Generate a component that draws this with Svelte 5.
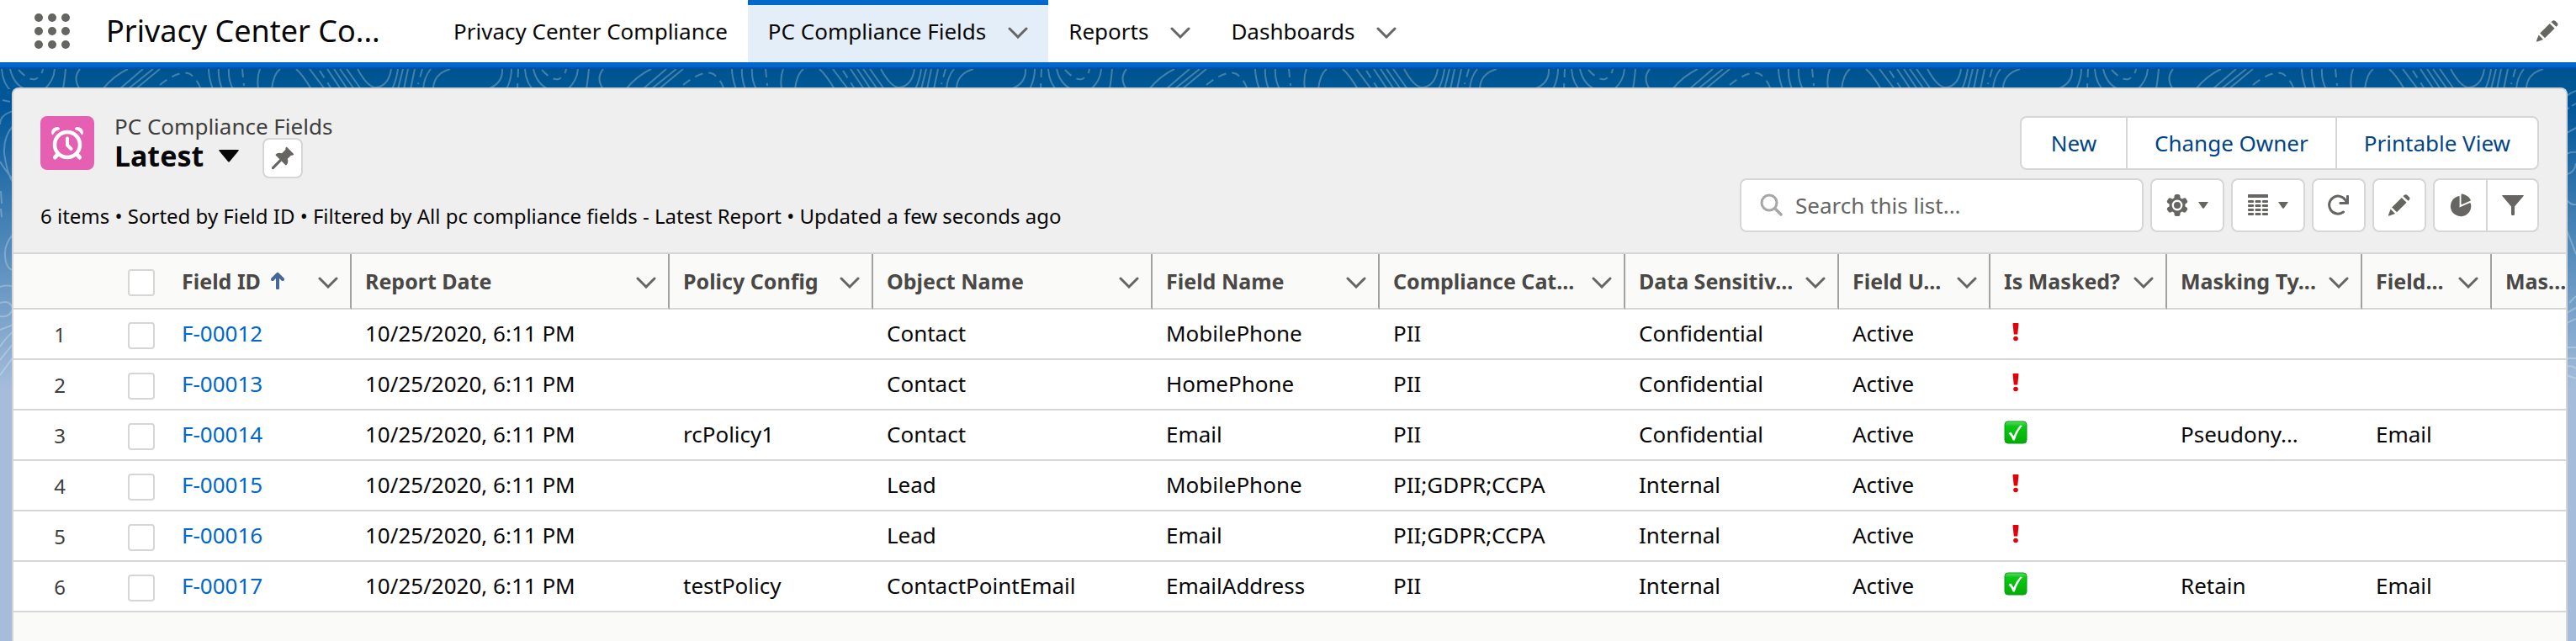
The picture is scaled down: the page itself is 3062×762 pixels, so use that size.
<script>
  const tabs = [
    { label: 'Privacy Center Compliance', menu: false, active: false },
    { label: 'PC Compliance Fields', menu: true, active: true },
    { label: 'Reports', menu: true, active: false },
    { label: 'Dashboards', menu: true, active: false }
  ];

  const columns = [
    { label: 'Field ID', width: 218, sorted: true },
    { label: 'Report Date', width: 378 },
    { label: 'Policy Config', width: 242 },
    { label: 'Object Name', width: 332 },
    { label: 'Field Name', width: 270 },
    { label: 'Compliance Cat...', width: 292 },
    { label: 'Data Sensitiv...', width: 254 },
    { label: 'Field U...', width: 180 },
    { label: 'Is Masked?', width: 210 },
    { label: 'Masking Ty...', width: 232 },
    { label: 'Field...', width: 154 }
  ];

  const date = '10/25/2020, 6:11 PM';
  const rows = [
    { id: 'F-00012', policy: '', object: 'Contact', field: 'MobilePhone', category: 'PII', sensitivity: 'Confidential', masked: false, type: '', kind: '' },
    { id: 'F-00013', policy: '', object: 'Contact', field: 'HomePhone', category: 'PII', sensitivity: 'Confidential', masked: false, type: '', kind: '' },
    { id: 'F-00014', policy: 'rcPolicy1', object: 'Contact', field: 'Email', category: 'PII', sensitivity: 'Confidential', masked: true, type: 'Pseudony...', kind: 'Email' },
    { id: 'F-00015', policy: '', object: 'Lead', field: 'MobilePhone', category: 'PII;GDPR;CCPA', sensitivity: 'Internal', masked: false, type: '', kind: '' },
    { id: 'F-00016', policy: '', object: 'Lead', field: 'Email', category: 'PII;GDPR;CCPA', sensitivity: 'Internal', masked: false, type: '', kind: '' },
    { id: 'F-00017', policy: 'testPolicy', object: 'ContactPointEmail', field: 'EmailAddress', category: 'PII', sensitivity: 'Internal', masked: true, type: 'Retain', kind: 'Email' }
  ];
</script>

{#snippet chevron()}
  <svg class="chevron" width="24" height="14" viewBox="0 0 24 14" aria-hidden="true">
    <path d="M2 2 L12 12 L22 2" fill="none" stroke="#666564" stroke-width="3" stroke-linecap="round" />
  </svg>
{/snippet}

{#snippet pencil()}
  <svg width="28" height="28" viewBox="0 0 28 28" aria-hidden="true">
    <g fill="#666561">
      <path d="M19.500 2.300 Q21.500 0.300 23.500 2 L25.700 4.200 Q27.400 6 25.700 7.800 L24.600 8.800 L18.500 3.300 Z" />
      <path d="M16.800 5 L22.600 10.700 L11 22.300 L5.200 16.500 Z" />
      <path d="M3.600 18.500 L9 24 L2 26.600 Q0.800 26.800 1 25.600 Z" />
    </g>
  </svg>
{/snippet}

{#snippet caret()}
  <svg width="12" height="8" viewBox="0 0 12 8" aria-hidden="true"><path d="M0 0 H12 L6.800 7.500 Q6 8 5.200 7.500 Z" fill="#666561" /></svg>
{/snippet}

<div class="page">
  <header class="nav">
    <button class="launcher" aria-label="App Launcher">
      <svg width="44" height="44" viewBox="0 0 44 44" aria-hidden="true">
        {#each [6, 22, 38] as cy}
          {#each [6, 22, 38] as cx}
            <circle {cx} {cy} r="5" fill="#666561" />
          {/each}
        {/each}
      </svg>
    </button>
    <span class="app-name">Privacy Center Co...</span>
    <nav class="tabs">
      {#each tabs as tab}
        <div class="tab" class:active={tab.active}>
          <a href="#top">{tab.label}</a>
          {#if tab.menu}
            <button aria-label={`${tab.label} menu`}>{@render chevron()}</button>
          {/if}
        </div>
      {/each}
    </nav>
    <button class="edit-nav" aria-label="Edit navigation">{@render pencil()}</button>
  </header>

  <div class="backdrop">
    <svg class="contours" width="100%" height="360" aria-hidden="true">
      <defs>
        <pattern id="waves" width="622" height="360" patternUnits="userSpaceOnUse">
          <g fill="none" stroke="#ffffff" stroke-opacity="0.260" stroke-width="2">
            <path d="M2 0 Q3 18 15 28 M12 0 Q16 18 30 24 M65 0 Q64 14 53 24 M78 0 Q77 12 75 24 M95 0 Q86 11 95 24" />
            <path d="M152 0 Q135 8 122 24 M170 0 L142 24 M182 0 L152 24 M190 0 L161 24" />
            <path d="M248 0 Q248 10 253 24 M260 0 Q259 10 264 24 M272 0 Q271 12 277 24 M309 0 Q305 10 307 24 M333 0 Q325 6 323 24" />
            <path d="M352 0 Q360 7 370 24 M368 0 L386 24 M389 0 L405 24 M397 0 L413 24 M404 0 L421 24 M412 0 L429 24" />
            <path d="M425 0 Q437 22 447 22 Q462 20 465 0 M473 0 Q471 14 466 24 M479 0 L473 24 M485 0 L480 24 M493 0 L488 24" />
            <path d="M512 0 Q504 10 503 24 M535 0 Q515 6 515 24 M597 0 Q598 16 582 23 M608 0 Q608 12 602 24" />
            <path stroke-dasharray="10 7" d="M22 1 Q34 14 42 12 Q50 8 51 0 M190 19 Q214 0 226 6 Q234 12 238 22 M288 0 L290 20 M380 2 L393 22 M502 0 L497 18 M616 0 L615 24" />
          </g>
        </pattern>
      </defs>
      <rect width="100%" height="24" fill="url(#waves)" />
    </svg>
    <svg class="contours" width="16" height="390" viewBox="0 0 16 390" aria-hidden="true">
      <g fill="none" stroke="#ffffff" stroke-opacity="0.260" stroke-width="2">
        <path d="M3 37 L12 39 M16 50 Q0 54 0 66 M16 67 Q4 80 5 100 Q8 124 16 136 M0 110 Q6 120 16 132 M1 145 L2 160 M1 166 L2 176" />
        <path d="M16 196 Q5 208 6 222 Q7 238 16 239 M0 259 Q8 256 16 259 M0 278 Q12 274 15 285 Q12 296 0 294 M0 310 L16 304 M0 330 Q8 318 16 312 M0 346 L16 326 M0 364 L16 342" />
      </g>
    </svg>
    <svg class="contours right" width="12" height="390" viewBox="0 0 12 390" aria-hidden="true">
      <g fill="none" stroke="#ffffff" stroke-opacity="0.260" stroke-width="2">
        <path d="M1 32 Q6 28 12 26 M1 48 L4 46 M7 44 L12 41 M1 76 L12 70 M1 101 Q6 98 12 99 M1 125 Q10 124 12 112 M1 156 Q6 162 12 161 M1 192 Q6 204 12 220 M4 278 L12 270 M1 290 L12 284 M1 302 L12 297 M1 331 H12 M1 344 H12 M1 354 Q6 352 12 356 M1 364 L12 368" />
      </g>
    </svg>

    <main class="card">
      <section class="list-header">
        <div class="heading">
          <div class="object-icon">
            <svg width="40" height="40" viewBox="0 0 40 40" role="img" aria-label="Alarm clock">
              <g fill="none" stroke="#fff" stroke-linecap="round">
                <circle cx="20" cy="22" r="15" stroke-width="4.500" />
                <path d="M20 14.500 V22.500 L24.500 27" stroke-width="4" stroke-linejoin="round" />
                <path d="M8 34 L5.500 37 M32 34 L34.500 37" stroke-width="5" />
              </g>
              <path d="M1.500 9.500 Q0 3.500 5.500 1.500 Q10 0 11 2.500 Q11.300 4 9.500 4.600 Q5 6 3.600 9.300 Q2.500 11 1.500 9.500 Z M38.500 9.500 Q40 3.500 34.500 1.500 Q30 0 29 2.500 Q28.700 4 30.500 4.600 Q35 6 36.400 9.300 Q37.500 11 38.500 9.500 Z" fill="#fff" />
            </svg>
          </div>
          <div class="titles">
            <span class="object-name">PC Compliance Fields</span>
            <div class="view-row">
              <h1><button class="view-picker">Latest
                <svg width="24" height="15" viewBox="0 0 24 15" aria-hidden="true"><path d="M1 0 H23 Q24.300 0.200 23.400 1.500 L13 14 Q12 15 11 14 L0.600 1.500 Q-0.300 0.200 1 0 Z" fill="#080707" /></svg>
              </button></h1>
              <button class="pin" aria-label="Pin this list view">
                <svg width="28" height="28" viewBox="0 0 28 28" aria-hidden="true">
                  <path d="M17.800 1.200 Q18.400 0.500 19.200 1.100 L26.800 8.700 Q27.500 9.500 26.700 10.200 Q25.500 11 24.200 10.400 L19.800 14.800 Q21.200 18.500 18.800 22 Q18 22.800 17.200 22 L12.600 17.500 L3.600 26.700 Q2.300 27.800 1.200 26.700 Q0.300 25.600 1.400 24.400 L10.400 15.300 L5.800 10.700 Q5.200 9.900 6 9.200 Q9.500 7.200 13 8.200 L17.500 3.800 Q17 2.300 17.800 1.200 Z" fill="#666561" />
                </svg>
              </button>
            </div>
          </div>
          <div class="button-group actions">
            <button>New</button>
            <button>Change Owner</button>
            <button>Printable View</button>
          </div>
        </div>
        <div class="toolbar">
          <p>6 items • Sorted by Field ID • Filtered by All pc compliance fields - Latest Report • Updated a few seconds ago</p>
          <label class="search">
            <svg width="28" height="28" viewBox="0 0 28 28" aria-hidden="true">
              <g fill="none" stroke="#a9a7a5" stroke-linecap="round"><circle cx="11" cy="11" r="9" stroke-width="3" /><path d="M18 18 L25 25" stroke-width="3.500" /></g>
            </svg>
            <input type="search" placeholder="Search this list..." aria-label="Search this list" />
          </label>
          <button class="tool wide" aria-label="List view controls">
            <svg width="26" height="26" viewBox="0 0 26 26" aria-hidden="true">
              <g fill="#666561">
                <rect x="9.500" y="0" width="7" height="26" rx="2.500" />
                <rect x="9.500" y="0" width="7" height="26" rx="2.500" transform="rotate(60 13 13)" />
                <rect x="9.500" y="0" width="7" height="26" rx="2.500" transform="rotate(120 13 13)" />
                <circle cx="13" cy="13" r="9.500" />
              </g>
              <circle cx="13" cy="13" r="5.200" fill="#666561" stroke="#fff" stroke-width="2.400" />
            </svg>
            {@render caret()}
          </button>
          <button class="tool wide" aria-label="Display as table">
            <svg width="24" height="26" viewBox="0 0 24 26" aria-hidden="true">
              <g fill="#666561">
                <rect width="24" height="4" rx="0.500" />
                {#each [7, 12, 17, 22] as y}
                  <rect x="0" {y} width="7" height="3" rx="1" />
                  <rect x="8.500" {y} width="7" height="3" rx="1" />
                  <rect x="17" {y} width="7" height="3" rx="1" />
                {/each}
              </g>
            </svg>
            {@render caret()}
          </button>
          <button class="tool" aria-label="Refresh">
            <svg width="26" height="26" viewBox="0 0 26 26" aria-hidden="true">
              <path d="M18.500 21 A10.500 10.500 0 1 1 21 7 L23 10" fill="none" stroke="#666561" stroke-width="3" stroke-linecap="round" />
              <path d="M22 2 Q22 1 23 1 H24 Q25 1 25 2 V11 Q25 12 24 12 H14.500 Q13.500 12 13.500 11 V10 Q13.500 9 14.500 9 H20 L22 7 Z" fill="#666561" />
            </svg>
          </button>
          <button class="tool" aria-label="Edit list">{@render pencil()}</button>
          <div class="button-group icons">
            <button aria-label="Show charts">
              <svg width="26" height="28" viewBox="0 0 26 28" aria-hidden="true">
                <path d="M11 3 Q11.600 3 11.600 3.600 V16.500 L22.800 11.500 Q24.800 10.800 25 12.500 A12.200 12.200 0 1 1 11 3 Z M13.500 1.500 Q13.600 0.400 14.800 0.600 Q21.500 2 24.700 7.400 Q25 8.300 24.300 8.700 L14.200 13.300 Q13.500 13.400 13.500 12.700 Z" fill="#666561" />
              </svg>
            </button>
            <button aria-label="Show filters">
              <svg width="26" height="26" viewBox="0 0 26 26" aria-hidden="true">
                <path d="M0.700 1 H25.300 Q26.300 1.200 25.600 2.100 L15 14.500 V23.500 Q15 25 13.800 25 H12.200 Q11 25 11 23.500 V14.500 L0.400 2.100 Q-0.300 1.200 0.700 1 Z" fill="#666561" />
              </svg>
            </button>
          </div>
        </div>
      </section>

      <div class="table-wrap">
        <table>
          <colgroup>
            <col style="width: 104px" />
            <col style="width: 80px" />
            {#each columns as column}
              <col style="width: {column.width}px" />
            {/each}
            <col />
          </colgroup>
          <thead>
            <tr>
              <th class="plain"></th>
              <th class="plain check"><input type="checkbox" aria-label="Select all items" /></th>
              {#each columns as column}
                <th scope="col">
                  <div class="head">
                    <span>{column.label}</span>
                    {#if column.sorted}
                      <svg width="16" height="20" viewBox="0 0 16 20" role="img" aria-label="Sorted ascending">
                        <path d="M8 18.500 V3 M2 8 L8 2 L14 8" fill="none" stroke="#496796" stroke-width="4" stroke-linecap="round" />
                      </svg>
                    {/if}
                    <button aria-label={`${column.label} actions`}>{@render chevron()}</button>
                  </div>
                </th>
              {/each}
              <th scope="col" class="plain"><div class="head"><span>Mas...</span></div></th>
            </tr>
          </thead>
          <tbody>
            {#each rows as row, i}
              <tr>
                <td class="number">{i + 1}</td>
                <td class="check"><input type="checkbox" aria-label={`Select item ${i + 1}`} /></td>
                <td><a href="#top">{row.id}</a></td>
                <td>{date}</td>
                <td>{row.policy}</td>
                <td>{row.object}</td>
                <td>{row.field}</td>
                <td>{row.category}</td>
                <td>{row.sensitivity}</td>
                <td>Active</td>
                <td>
                  {#if row.masked}
                    <svg class="mark" width="28" height="28" viewBox="0 0 28 28" role="img" aria-label="Masked">
                      <defs>
                        <linearGradient id="gloss" x1="0" y1="0" x2="0" y2="1">
                          <stop offset="0" stop-color="#5fdc66" /><stop offset="0.220" stop-color="#0ac813" /><stop offset="1" stop-color="#03ad03" />
                        </linearGradient>
                      </defs>
                      <rect x="1" y="1" width="26" height="26" rx="4" fill="url(#gloss)" stroke="#0a9a1c" />
                      <path d="M5.500 15 L8.300 13.500 L11.500 18.500 Q14.500 11 19.500 5.500 L22 6 Q15.500 13.500 12.800 23.500 L10.800 23.500 Q9 18.500 5.500 15 Z" fill="#fff" />
                    </svg>
                  {:else}
                    <svg class="mark" width="28" height="28" viewBox="0 0 28 28" role="img" aria-label="Not masked">
                      <path d="M10.500 5 Q10.400 4 11.400 4 H16.600 Q17.600 4 17.500 5 L16.200 17.500 H11.800 Z" fill="#e50008" />
                      <circle cx="14" cy="22.500" r="2.800" fill="#e50008" />
                    </svg>
                  {/if}
                </td>
                <td>{row.type}</td>
                <td>{row.kind}</td>
                <td></td>
              </tr>
            {/each}
          </tbody>
        </table>
      </div>
    </main>
  </div>
</div>

<style>
  :global(body) {
    margin: 0;
    overflow-x: hidden;
  }
  * {
    box-sizing: border-box;
  }
  .page {
    display: flex;
    flex-direction: column;
    min-height: 100vh;
    font: 26px/38px 'Noto Sans', 'Open Sans', sans-serif;
    color: #080707;
  }
  svg {
    display: block;
    flex: none;
  }
  button {
    margin: 0;
    padding: 0;
    border: 0;
    background: none;
    font: inherit;
    color: inherit;
  }
  a {
    color: inherit;
    text-decoration: none;
  }
  .nav {
    display: flex;
    flex: none;
    align-items: center;
    height: 80px;
    padding: 0 20px 0 40px;
    background: #fff;
    border-bottom: 6px solid #0167ca;
  }
  .app-name {
    width: 389px;
    margin-left: 42px;
    font-size: 36px;
    line-height: 72px;
  }
  .tabs {
    display: flex;
    align-self: stretch;
    flex: 1;
  }
  .tab {
    display: flex;
    align-items: center;
    gap: 26px;
    padding: 0 24px 6px;
    border-top: 6px solid transparent;
  }
  .tab.active {
    border-top-color: #0167ca;
    background: #e4eef8;
  }
  .tab .chevron {
    margin-top: 4px;
  }
  .backdrop {
    position: relative;
    display: flex;
    flex: 1;
    padding: 22px 10px 0 14px;
    border-top: 2px solid #0250b2;
    background: linear-gradient(#00528c, #005794 16px, #00569a 44px, #a5bddb 380px);
  }
  .contours {
    position: absolute;
    top: 0;
    left: 0;
  }
  .contours.right {
    left: auto;
    right: 0;
  }
  .card {
    position: relative;
    display: flex;
    flex-direction: column;
    flex: 1;
    min-width: 0;
    overflow: hidden;
    border: 2px solid #d6d4d3;
    border-bottom: 0;
    border-radius: 8px 8px 0 0;
    background: #fafaf8;
  }
  .list-header {
    padding: 32px 32px 24px;
    background: #efefef;
    border-bottom: 2px solid #d6d6d4;
  }
  .heading {
    display: flex;
    align-items: flex-start;
    height: 74px;
  }
  .object-icon {
    display: grid;
    place-items: center;
    width: 64px;
    height: 64px;
    border-radius: 8px;
    background: #e560b3;
  }
  .titles {
    flex: 1;
    margin-left: 24px;
  }
  .object-name {
    display: block;
    line-height: 24px;
    color: #3e3e3c;
  }
  .view-row {
    display: flex;
    align-items: center;
    gap: 28px;
    height: 48px;
    margin-top: 2px;
  }
  h1 {
    margin: 0;
    font-size: 34px;
    line-height: 44px;
  }
  .view-picker {
    display: flex;
    align-items: center;
    gap: 18px;
    font-weight: 700;
    margin-bottom: 6px;
  }
  .pin,
  .tool {
    display: flex;
    align-items: center;
    justify-content: center;
    gap: 12px;
    width: 64px;
    height: 64px;
    border: 2px solid #d6d6d5;
    border-radius: 8px;
    background: #fff;
    flex: none;
  }
  .pin {
    width: 48px;
    height: 48px;
  }
  .tool.wide {
    width: 88px;
  }
  .button-group {
    display: flex;
    height: 64px;
    border: 2px solid #d6d6d5;
    border-radius: 8px;
    background: #fff;
    flex: none;
  }
  .button-group button {
    display: flex;
    align-items: center;
    justify-content: center;
    min-width: 124px;
    padding: 0 32px;
    color: #014486;
  }
  .button-group button + button {
    border-left: 2px solid #d6d6d5;
  }
  .button-group.icons button {
    width: 61px;
    min-width: 0;
    padding: 0;
  }
  .toolbar {
    display: flex;
    align-items: center;
    gap: 8px;
    height: 64px;
  }
  .toolbar p {
    flex: 1;
    margin: 26px 0 0;
    font-size: 24px;
    white-space: nowrap;
  }
  .search {
    display: flex;
    align-items: center;
    gap: 14px;
    width: 480px;
    height: 64px;
    padding: 0 22px;
    border: 2px solid #d6d6d5;
    border-radius: 8px;
    background: #fff;
  }
  .search input {
    flex: 1;
    min-width: 0;
    padding: 0;
    border: 0;
    outline: 0;
    background: none;
    font: inherit;
  }
  .search input::placeholder {
    color: #666564;
    opacity: 1;
  }
  .table-wrap {
    overflow: hidden;
  }
  table {
    width: 100%;
    table-layout: fixed;
    border-collapse: separate;
    border-spacing: 0;
  }
  th,
  td {
    padding: 0 0 0 16px;
    border-bottom: 2px solid #d6d6d4;
    text-align: left;
    font-weight: 400;
    white-space: nowrap;
  }
  th {
    height: 66px;
    padding-right: 14px;
    border-right: 2px solid #a4a2a1;
    color: #4a4846;
    font-weight: 700;
    font-size: 25px;
  }
  th.plain {
    border-right: 0;
    padding-right: 0;
  }
  td {
    height: 60px;
    padding-bottom: 2px;
    background: #fff;
  }
  .head {
    display: flex;
    align-items: center;
    gap: 12px;
  }
  .head button {
    margin-left: auto;
    padding-top: 4px;
  }
  td a {
    color: #0167ca;
  }
  td.number {
    padding: 2px 42px 0 0;
    text-align: right;
    font-size: 24px;
    color: #3e3e3c;
  }
  th.check,
  td.check {
    padding: 4px 0 0 32px;
  }
  input[type='checkbox'] {
    display: block;
    appearance: none;
    width: 32px;
    height: 32px;
    margin: 0;
    border: 2px solid #d6d6d5;
    border-radius: 4px;
    background: #fff;
  }
  .mark {
    margin-bottom: 4px;
  }
</style>
